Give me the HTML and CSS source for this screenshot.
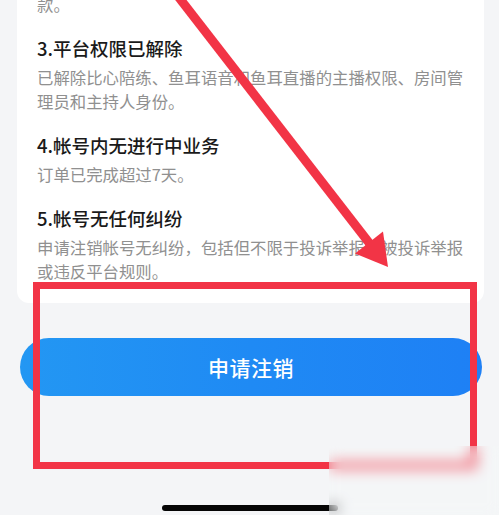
FILE: index.html
```html
<!DOCTYPE html>
<html lang="zh-CN">
<head>
    <meta charset="UTF-8">
    <meta name="viewport" content="width=device-width, initial-scale=1.0">
    <title>注销帐号</title>
    <link rel="stylesheet" href="styles.css">
</head>
<body>

    <!-- Contenido de la página -->
    <div class="screen">
        <section class="rules-card">
            <p class="rule-text rule-tail">款。</p>
            <div class="rule">
                <h3 class="rule-title">3.平台权限已解除</h3>
                <p class="rule-text">已解除比心陪练、鱼耳语音和鱼耳直播的主播权限、房间管理员和主持人身份。</p>
            </div>
            <div class="rule">
                <h3 class="rule-title">4.帐号内无进行中业务</h3>
                <p class="rule-text">订单已完成超过7天。</p>
            </div>
            <div class="rule">
                <h3 class="rule-title">5.帐号无任何纠纷</h3>
                <p class="rule-text">申请注销帐号无纠纷，包括但不限于投诉举报和被投诉举报或违反平台规则。</p>
            </div>
        </section>

        <button class="cancel-btn">申请注销</button>

        <div class="home-bar"></div>
    </div>

    <!-- Anotaciones encima de la captura -->
    <div class="mark-box"></div>
    <svg class="mark-arrow" width="499" height="515" viewBox="0 0 499 515">
        <line x1="177" y1="-5" x2="370" y2="244" stroke="#f23446" stroke-width="9"/>
        <polygon points="383,231.5 355,253.5 388,267" fill="#f23446"/>
    </svg>
    <div class="blur-patch"></div>

</body>
</html>
```

FILE: styles.css
```css
/* Base */
html, body {
    margin: 0;
    padding: 0;
}

body {
    background: #f4f5f7;
    font-family: "Noto Sans CJK SC", "Noto Sans", sans-serif;
    width: 499px;
    height: 515px;
    overflow: hidden;
}

.screen {
    display: flex;
    flex-direction: column;
}

/* Tarjeta de condiciones */
.rules-card {
    background: #fff;
    margin: -8px 15px 0 17px;
    padding: 0 10px 20px 20px;
    border-radius: 0 0 12px 12px;
}

.rule {
    margin-top: 19px;
}

.rule-title {
    margin: 0;
    font-size: 18.5px;
    line-height: 26px;
    font-weight: 500;
    color: #1a1a1a;
}

.rule-text {
    margin: 4px 0 0 0;
    font-size: 16.4px;
    line-height: 24px;
    color: #909090;
}

.rule-tail {
    margin: 0;
}

/* Botón principal */
.cancel-btn {
    margin: 35px 17px 0 20px;
    height: 58px;
    border: none;
    border-radius: 29px;
    background: linear-gradient(90deg, #2397f3 0%, #1f8af4 50%, #1e80f5 100%);
    color: #fff;
    font-family: inherit;
    font-size: 21px;
    font-weight: 500;
    letter-spacing: 0.5px;
    cursor: pointer;
}

/* Indicador de inicio */
.home-bar {
    margin: 109px auto 0;
    width: 176px;
    height: 6px;
    border-radius: 3px;
    background: #050505;
}

/* Marcas rojas */
.mark-box {
    position: absolute;
    left: 33px;
    top: 282px;
    width: 444px;
    height: 187px;
    box-sizing: border-box;
    border: 7px solid #f23446;
}

.mark-arrow {
    position: absolute;
    left: 0;
    top: 0;
    pointer-events: none;
}

/* Parche difuminado (marca de agua) */
.blur-patch {
    position: absolute;
    left: 329px;
    top: 446px;
    width: 170px;
    height: 69px;
    background: rgba(246, 247, 249, 0.3);
    backdrop-filter: blur(7px);
}
```
